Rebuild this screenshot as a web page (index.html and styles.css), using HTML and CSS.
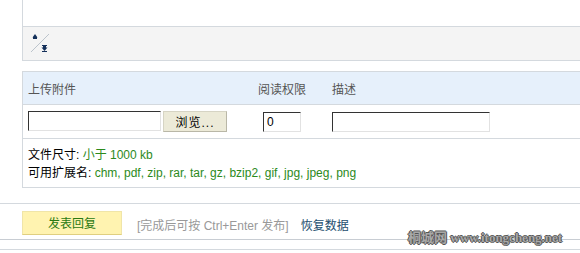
FILE: index.html
```html
<!DOCTYPE html>
<html lang="zh">
<head>
    <meta charset="UTF-8">
    <title>发表回复</title>
    <link rel="stylesheet" href="styles.css">
</head>
<body>
    <div class="editor">
        <div class="editarea"></div>
        <div class="toolbar">
            <svg class="resize" width="20" height="20" viewBox="0 0 20 20">
                <line x1="1" y1="19" x2="19" y2="1" stroke="#bcc4cc" stroke-width="1"/>
                <path d="M2.5 4.5 L5 1 L7.5 4.5 Z" fill="#14305a"/>
                <rect x="3" y="4" width="4" height="2" fill="#14305a"/>
                <rect x="12" y="12" width="5" height="1" fill="#14305a"/>
                <rect x="13" y="13" width="3" height="2" fill="#14305a"/>
                <path d="M11.5 14.5 L17.5 14.5 L14.5 18 Z" fill="#14305a"/>
                <rect x="12" y="18" width="5" height="1" fill="#14305a"/>
            </svg>
        </div>
    </div>

    <div class="attach">
        <div class="row head">
            <div>上传附件</div>
            <div>阅读权限</div>
            <div>描述</div>
        </div>
        <div class="row fields">
            <div class="filebox">
                <input type="text" class="inp file">
                <button class="browse">浏览...</button>
            </div>
            <div><input type="text" class="inp perm" value="0"></div>
            <div><input type="text" class="inp desc"></div>
        </div>
        <div class="info">
            <p>文件尺寸: <span class="hl">小于 1000 kb</span></p>
            <p>可用扩展名: <span class="hl">chm, pdf, zip, rar, tar, gz, bzip2, gif, jpg, jpeg, png</span></p>
        </div>
    </div>

    <div class="submitbar">
        <button class="submit">发表回复</button>
        <span class="tip">[完成后可按 Ctrl+Enter 发布]</span>
        <a class="restore" href="#">恢复数据</a>
    </div>
    <div class="endline"></div>

    <div class="watermark">桐城网 www.itongcheng.net</div>
</body>
</html>
```

FILE: styles.css
```css
body {
    margin: 0;
    font-family: "Liberation Sans", "Noto Sans CJK SC", sans-serif;
    font-size: 12px;
    color: #000;
    background: #fff;
    position: relative;
    height: 253px;
    overflow: hidden;
}
.editor {
    margin-left: 22px;
    border-left: 1px solid #d4d9de;
}
.editarea {
    height: 26px;
    border-bottom: 1px solid #d4d9de;
}
.toolbar {
    height: 34px;
    background-color: #f4f4f4;
    border-bottom: 1px solid #d4d9de;
    padding: 6px 0 0 7px;
    box-sizing: border-box;
}
.resize {
    display: block;
}
.attach {
    margin-top: 10px;
    margin-left: 22px;
    border-left: 1px solid #d4d9de;
    border-top: 1px solid #d4d9de;
}
.row {
    display: grid;
    grid-template-columns: 230px 74px 1fr;
    padding-left: 5px;
    border-bottom: 1px solid #d4d9de;
}
.head {
    height: 32px;
    align-items: center;
    background-color: #e6f0fb;
    color: #555;
}
.fields {
    height: 33px;
    align-items: center;
}
.filebox {
    display: flex;
    gap: 2px;
}
.inp {
    box-sizing: border-box;
    height: 20px;
    border: 1px solid #e2e2e2;
    border-top-color: #333;
    border-left-color: #333;
    font-family: inherit;
    font-size: 12px;
    padding: 2px 3px;
    background: #fff;
    margin: 0;
}
.file {
    width: 133px;
}
.perm {
    width: 38px;
    margin-left: 5px;
}
.desc {
    width: 158px;
}
.browse {
    width: 64px;
    height: 21px;
    margin: 0;
    padding: 0;
    font-family: inherit;
    font-size: 12px;
    letter-spacing: 1px;
    background-color: #ecead8;
    border: 1px solid #d6d4c4;
    border-bottom-color: #b9b7a7;
    border-right-color: #b9b7a7;
}
.info {
    padding: 7px 0 5px 5px;
    border-bottom: 1px solid #d4d9de;
}
.info p {
    margin: 0;
    line-height: 18px;
}
.hl {
    color: #2c8a1c;
}
.submitbar {
    margin-top: 15px;
    border-top: 1px solid #d4d9de;
    border-bottom: 1px solid #c8cdd3;
    height: 35px;
    display: flex;
    align-items: center;
    padding-left: 22px;
}
.submit {
    width: 100px;
    height: 24px;
    margin: 2px 0 0 0;
    background-color: #fff3b0;
    border: 1px solid #f0e5a8;
    border-bottom-color: #e0cf80;
    color: #2a7a12;
    font-family: inherit;
    font-size: 12px;
    padding: 0;
}
.tip {
    margin-left: 15px;
    margin-top: 5px;
    color: #999;
}
.restore {
    margin-left: 12px;
    margin-top: 5px;
    color: #1d4e6e;
    text-decoration: none;
}
.endline {
    margin-top: 9px;
    border-top: 1px solid #d4d9de;
}
.watermark {
    position: absolute;
    left: 408px;
    top: 230px;
    white-space: nowrap;
    font-family: "Liberation Serif", "Noto Sans CJK SC", serif;
    font-weight: bold;
    font-size: 13px;
    line-height: 15px;
    color: #a8a8a8;
    text-shadow: 1px 0 #555, -1px 0 #555, 0 1px #555, 0 -1px #555;
}
```
